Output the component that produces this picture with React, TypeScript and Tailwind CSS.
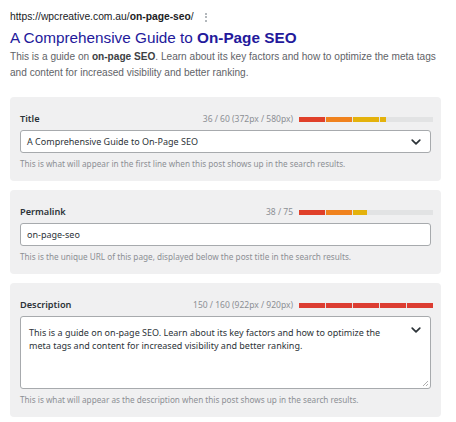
import React from "react";

type Seg = { w: number; c: string };

function Bar({ segs }: { segs: Seg[] }) {
  return (
    <div className="relative flex h-[5px] w-[134px] gap-[1px] bg-[#e2e3e4]">
      {[0, 1, 2, 3, 4].map((i) => {
        const s = segs[i];
        return (
          <div key={i} className="h-full w-[26px]">
            {s && <div className="h-full" style={{ width: `${s.w}%`, background: s.c }} />}
          </div>
        );
      })}
    </div>
  );
}

function Chevron() {
  return (
    <svg width="10" height="6" viewBox="0 0 10 6" fill="none">
      <path d="M1.2 1.1 L5 4.8 L8.8 1.1" stroke="#2c3338" strokeWidth="1.7" strokeLinecap="round" strokeLinejoin="round" />
    </svg>
  );
}

function Card({
  label,
  counter,
  segs,
  help,
  children,
}: {
  label: string;
  counter: string;
  segs: Seg[];
  help: string;
  children: React.ReactNode;
}) {
  return (
    <div className="rounded-[4px] bg-[#f0f0f1] px-[10px] pt-[15px] pb-[11px]">
      <div className="mb-[4px] flex h-[14px] items-center">
        <span className="text-[9.2px] font-semibold leading-[14px] text-[#2c3338]">{label}</span>
        <span className="ml-auto mr-[6px] text-[8.5px] leading-[14px] text-[#8c8f94]">{counter}</span>
        <div className="-mr-[2px]">
          <Bar segs={segs} />
        </div>
      </div>
      {children}
      <div className="mt-[5px] text-[8.2px] leading-[12px] text-[#8c8f94]">{help}</div>
    </div>
  );
}

export default function App() {
  const red = "#e0402a";
  const orange = "#f0821e";
  const yellow = "#e4b20c";
  const dred = "#dc3d32";
  return (
    <div className="min-h-[422px] w-[456px] bg-white pl-[10px] pr-[15px] pt-[10px]" style={{ fontFamily: '"Noto Sans", sans-serif' }}>
      <div style={{ fontFamily: '"Liberation Sans", Arial, sans-serif' }}>
        <div className="flex items-center text-[10.3px] leading-[14px] text-[#202124]">
          <span>
            https://wpcreative.com.au/<b>on-page-seo</b>/
          </span>
          <span className="ml-[11px] flex flex-col gap-[1.5px]">
            <span className="h-[2px] w-[2px] rounded-full bg-[#9aa0a6]" />
            <span className="h-[2px] w-[2px] rounded-full bg-[#9aa0a6]" />
            <span className="h-[2px] w-[2px] rounded-full bg-[#9aa0a6]" />
          </span>
        </div>
        <div className="mt-[4px] text-[15.3px] leading-[20px] text-[#23199b]">
          A Comprehensive Guide to <b>On-Page SEO</b>
        </div>
        <div className="-mr-[4px] mt-[1px] text-[10.1px] leading-[16px] text-[#5f6368]">
          This is a guide on <b className="text-[#3c4043]">on-page SEO</b>. Learn about its key factors and how to optimize the meta tags and content for increased visibility and better ranking.
        </div>
      </div>

      <div className="mt-[16px] flex flex-col gap-[9px]">
        <Card
          label="Title"
          counter="36 / 60 (372px / 580px)"
          segs={[
            { w: 100, c: red },
            { w: 100, c: orange },
            { w: 100, c: yellow },
            { w: 22, c: yellow },
          ]}
          help="This is what will appear in the first line when this post shows up in the search results."
        >
          <div className="flex h-[23px] items-center rounded-[3px] border border-[#a7aaad] bg-white pl-[6px] pr-[9px]">
            <span className="text-[9px] text-[#2c3338]">A Comprehensive Guide to On-Page SEO</span>
            <span className="ml-auto flex">
              <Chevron />
            </span>
          </div>
        </Card>

        <Card
          label="Permalink"
          counter="38 / 75"
          segs={[
            { w: 100, c: red },
            { w: 100, c: orange },
            { w: 52, c: yellow },
          ]}
          help="This is the unique URL of this page, displayed below the post title in the search results."
        >
          <div className="flex h-[23px] items-center rounded-[3px] border border-[#a7aaad] bg-white pl-[6px]">
            <span className="text-[9px] text-[#2c3338]">on-page-seo</span>
          </div>
        </Card>

        <Card
          label="Description"
          counter="150 / 160 (922px / 920px)"
          segs={[
            { w: 100, c: dred },
            { w: 100, c: dred },
            { w: 100, c: dred },
            { w: 100, c: dred },
            { w: 100, c: dred },
          ]}
          help="This is what will appear as the description when this post shows up in the search results."
        >
          <div className="relative flex h-[73px] rounded-[3px] border border-[#a7aaad] bg-white pl-[8px] pr-[9px] pt-[9px]">
            <span className="w-[362px] text-[9px] leading-[13px] text-[#2c3338]">
              This is a guide on on-page SEO. Learn about its key factors and how to optimize the meta tags and content for increased visibility and better ranking.
            </span>
            <span className="ml-auto mt-[1px] flex h-[6px]">
              <Chevron />
            </span>
            <svg className="absolute bottom-[1px] right-[1px]" width="7" height="7" viewBox="0 0 7 7">
              <path d="M6 1 L1 6 M6 4 L4 6" stroke="#9a9a9a" strokeWidth="0.8" />
            </svg>
          </div>
        </Card>
      </div>
    </div>
  );
}
